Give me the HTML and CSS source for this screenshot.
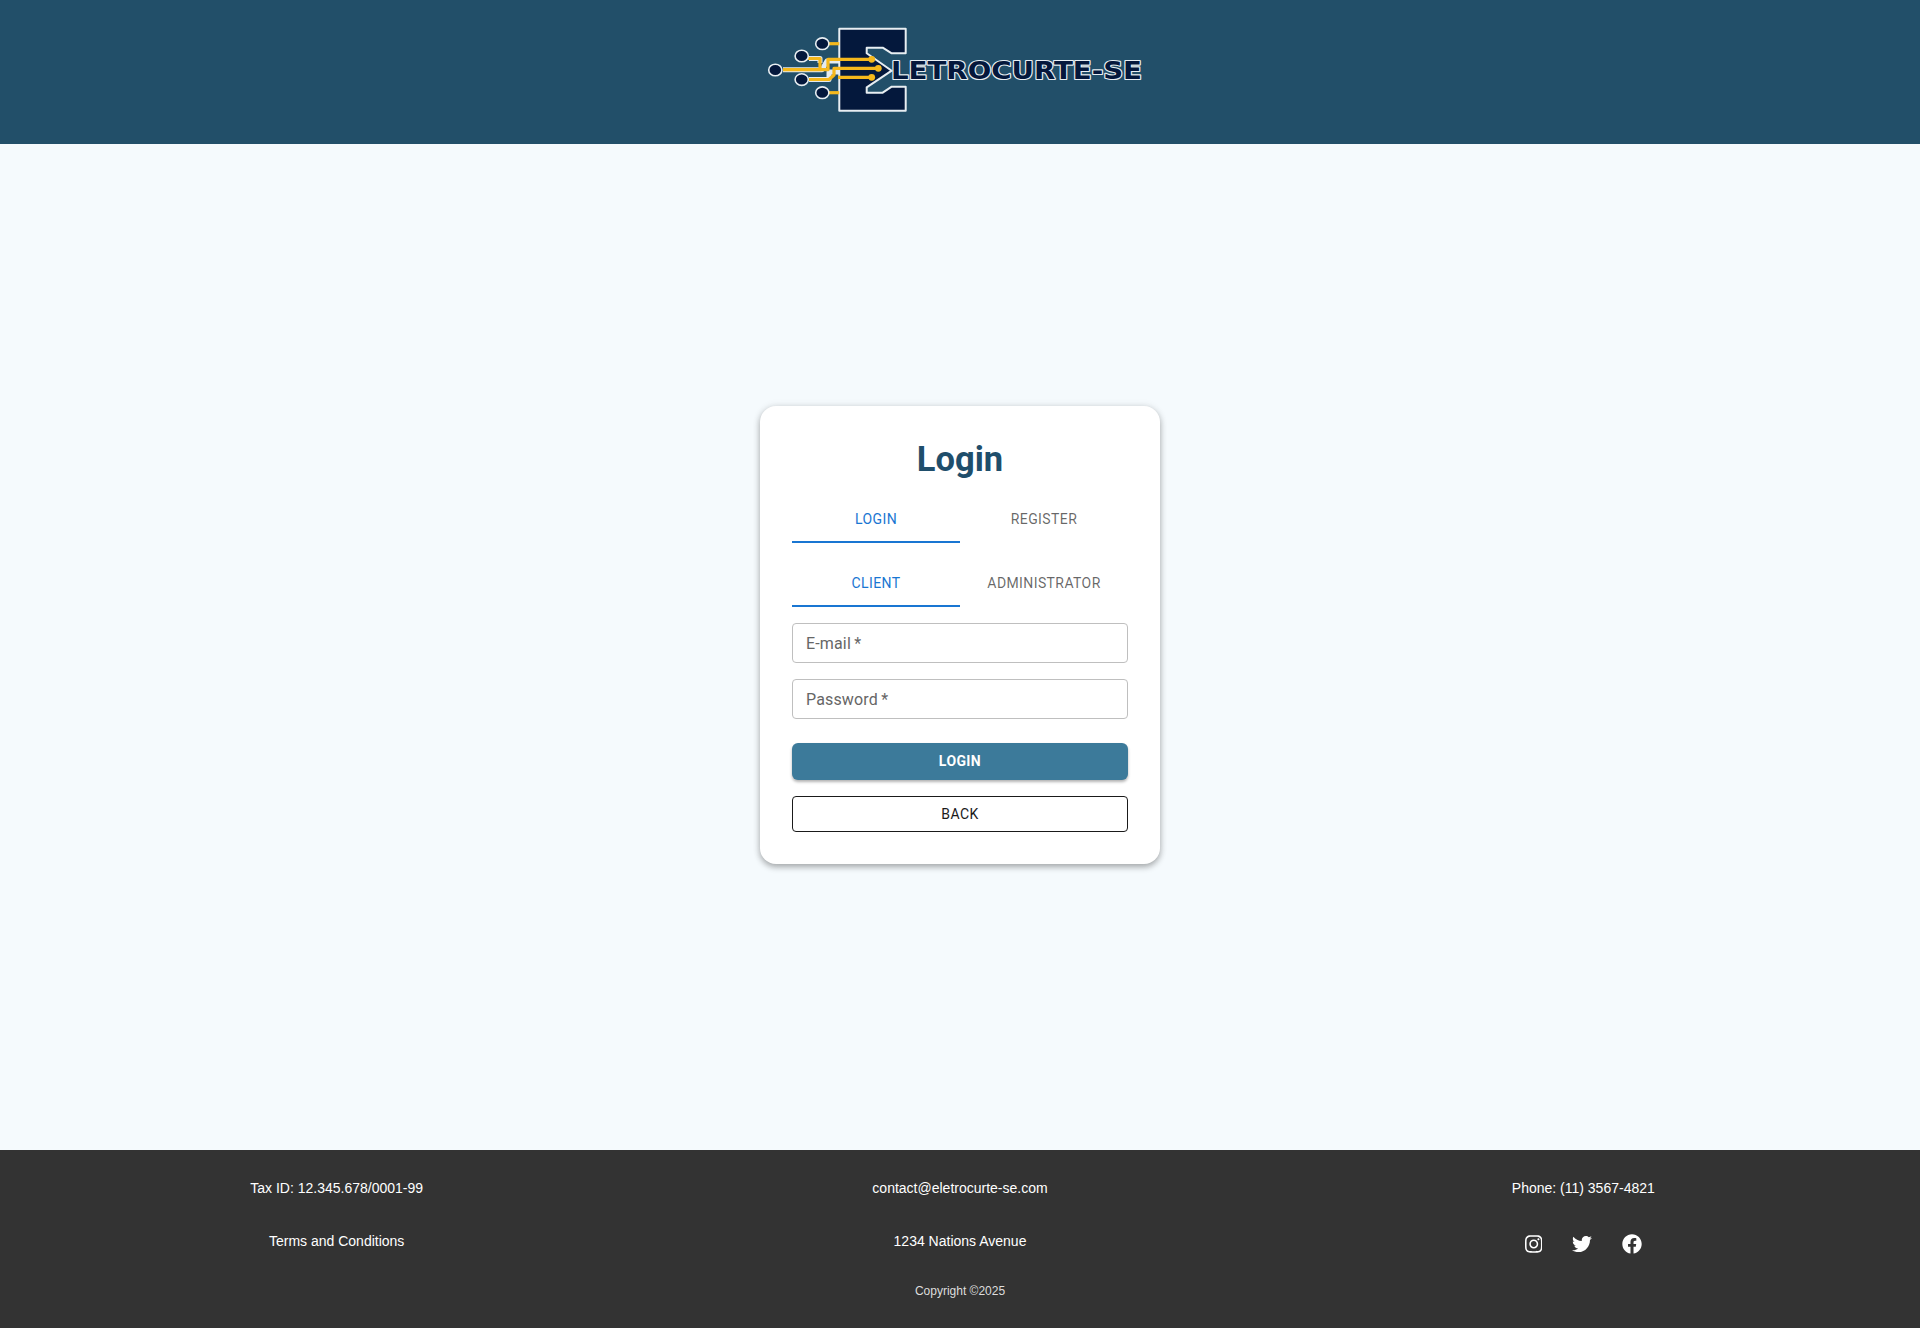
FILE: index.html
```html
<!DOCTYPE html>
<html lang="en">
<head>
    <meta charset="UTF-8">
    <meta name="viewport" content="width=device-width, initial-scale=1.0">
    <title>Eletrocurte-se - Login</title>
    <link rel="stylesheet" href="styles.css">
</head>
<body>
    <!-- Header with logo -->
    <header class="header">
        <svg class="logo" viewBox="0 0 380 90" width="380" height="90" role="img" aria-label="Eletrocurte-se">
            <!-- halo of the traces, left of the E -->
            <g class="trace-halo">
                <path d="M18 44.7H57L62 36H75"/>
                <path d="M44 33.5H55V38"/>
                <path d="M44 54.5H64V47H75"/>
            </g>
            <path class="logo-e" d="M74.3 3.7H140.7V28.3H126.7L117.7 22.7H101.7V28.3L126.7 45.7L101.7 62.3V67.7H117.7L126.7 61.7H140.7V85.7H74.3Z"/>
            <g class="trace">
                <path d="M63 18.7H74.3"/>
                <path d="M63 67.7H74.3"/>
                <path d="M43 33.5H55V44.7H18"/>
                <path d="M55 44.7H63V34.3H106.7"/>
                <path d="M43 54.5H64L69 50V43.3H113.3"/>
                <path d="M73 52.3H106.7"/>
            </g>
            <g class="trace-dot">
                <circle cx="106.7" cy="34.3" r="3.4"/>
                <circle cx="113.3" cy="43.3" r="3.4"/>
                <circle cx="106.7" cy="52.3" r="3.4"/>
            </g>
            <g class="node">
                <ellipse cx="57.3" cy="18.7" rx="6.6" ry="5.8"/>
                <ellipse cx="36.7" cy="31" rx="6.6" ry="5.8"/>
                <ellipse cx="10.3" cy="45" rx="6.6" ry="5.8"/>
                <ellipse cx="36.7" cy="54.6" rx="6.6" ry="5.8"/>
                <ellipse cx="57.3" cy="67.7" rx="6.6" ry="5.8"/>
            </g>
            <text class="logo-text" x="126" y="54" textLength="251" lengthAdjust="spacingAndGlyphs">LETROCURTE-SE</text>
        </svg>
    </header>

    <!-- Login card -->
    <main class="main">
        <div class="card">
            <h1>Login</h1>
            <div class="tabs">
                <button class="tab active" type="button">Login</button>
                <button class="tab" type="button">Register</button>
            </div>
            <div class="tabs tabs-user">
                <button class="tab active" type="button">Client</button>
                <button class="tab" type="button">Administrator</button>
            </div>
            <form class="login-form">
                <input class="field" type="email" placeholder="E-mail&#8201;*" aria-label="E-mail">
                <input class="field" type="password" placeholder="Password&#8201;*" aria-label="Password">
                <button class="btn btn-login" type="button">Login</button>
                <button class="btn btn-back" type="button">Back</button>
            </form>
        </div>
    </main>

    <!-- Footer -->
    <footer class="footer">
        <div class="footer-grid">
            <p>Tax ID: 12.345.678/0001-99</p>
            <p>contact@eletrocurte-se.com</p>
            <p>Phone: (11) 3567-4821</p>
            <a href="#">Terms and Conditions</a>
            <p>1234 Nations Avenue</p>
            <div class="social">
                <a href="#" aria-label="Instagram"><svg viewBox="0 0 448 512" width="17.5" height="20"><path d="M224.1 141c-63.6 0-114.9 51.3-114.9 114.9s51.3 114.9 114.9 114.9S339 319.5 339 255.9 287.7 141 224.1 141zm0 189.6c-41.1 0-74.7-33.5-74.7-74.7s33.5-74.7 74.7-74.7 74.7 33.5 74.7 74.7-33.6 74.7-74.7 74.7zm146.4-194.3c0 14.9-12 26.8-26.8 26.8-14.9 0-26.8-12-26.8-26.8s12-26.8 26.8-26.8 26.8 12 26.8 26.8zm76.1 27.2c-1.7-35.9-9.9-67.7-36.2-93.9-26.2-26.2-58-34.4-93.9-36.2-37-2.1-147.9-2.1-184.9 0-35.8 1.7-67.6 9.9-93.9 36.1s-34.4 58-36.2 93.9c-2.1 37-2.1 147.9 0 184.9 1.7 35.9 9.9 67.7 36.2 93.9s58 34.4 93.9 36.2c37 2.1 147.9 2.1 184.9 0 35.9-1.7 67.7-9.9 93.9-36.2 26.2-26.2 34.4-58 36.2-93.9 2.1-37 2.1-147.8 0-184.8zM398.8 388c-7.8 19.6-22.9 34.7-42.6 42.6-29.5 11.7-99.5 9-132.1 9s-102.7 2.6-132.1-9c-19.6-7.8-34.7-22.9-42.6-42.6-11.7-29.5-9-99.5-9-132.1s-2.6-102.7 9-132.1c7.8-19.6 22.9-34.7 42.6-42.6 29.5-11.7 99.5-9 132.1-9s102.7-2.6 132.1 9c19.6 7.8 34.7 22.9 42.6 42.6 11.7 29.5 9 99.5 9 132.1s2.7 102.7-9 132.1z"/></svg></a>
                <a href="#" aria-label="Twitter"><svg viewBox="0 0 512 512" width="20" height="20"><path d="M459.37 151.716c.325 4.548.325 9.097.325 13.645 0 138.72-105.583 298.558-298.558 298.558-59.452 0-114.68-17.219-161.137-47.106 8.447.974 16.568 1.299 25.34 1.299 49.055 0 94.213-16.568 130.274-44.832-46.132-.975-84.792-31.188-98.112-72.772 6.498.974 12.995 1.624 19.818 1.624 9.421 0 18.843-1.3 27.614-3.573-48.081-9.747-84.143-51.98-84.143-102.985v-1.299c13.969 7.797 30.214 12.67 47.431 13.319-28.264-18.843-46.781-51.005-46.781-87.391 0-19.492 5.197-37.36 14.294-52.954 51.655 63.675 129.3 105.258 216.365 109.807-1.624-7.797-2.599-15.918-2.599-24.04 0-57.828 46.782-104.934 104.934-104.934 30.213 0 57.502 12.67 76.67 33.137 23.715-4.548 46.456-13.32 66.599-25.34-7.798 24.366-24.366 44.833-46.132 57.827 21.117-2.273 41.584-8.122 60.426-16.243-14.292 20.791-32.161 39.308-52.628 54.253z"/></svg></a>
                <a href="#" aria-label="Facebook"><svg viewBox="0 0 512 512" width="20" height="20"><path d="M504 256C504 119 393 8 256 8S8 119 8 256c0 123.78 90.69 226.38 209.25 245V327.69h-63V256h63v-54.64c0-62.15 37-96.48 93.67-96.48 27.14 0 55.52 4.84 55.52 4.84v61h-31.28c-30.8 0-40.41 19.12-40.41 38.73V256h68.78l-11 71.69h-57.78V501C413.31 482.38 504 379.78 504 256z"/></svg></a>
            </div>
        </div>
        <p class="copyright">Copyright ©2025</p>
    </footer>
</body>
</html>
```

FILE: styles.css
```css
/* General Reset and Layout */
* {
    margin: 0;
    padding: 0;
    box-sizing: border-box;
}

body {
    font-family: 'Roboto', sans-serif;
    background-color: #F5FAFD;
    display: flex;
    flex-direction: column;
    min-height: 100vh;
}

/* Header */
.header {
    height: 144px;
    background-color: #224F69;
    display: flex;
    justify-content: center;
    padding-top: 25px;
}

.logo {
    display: block;
    margin-right: 10px;
}

.logo-e {
    fill: #04183C;
    stroke: #E8EEF2;
    stroke-width: 2;
    stroke-linejoin: round;
}

.trace,
.trace-halo {
    fill: none;
    stroke-linejoin: round;
}

.trace {
    stroke: #F5B81C;
    stroke-width: 3.2;
}

.trace-halo {
    stroke: #E4EBEF;
    stroke-width: 5;
}

.trace-dot {
    fill: #F5B81C;
}

.node {
    fill: #04183C;
    stroke: #E8EEF2;
    stroke-width: 1.6;
}

.logo-text {
    font-family: 'DejaVu Sans', sans-serif;
    font-weight: bold;
    font-size: 25px;
    fill: #04183C;
    stroke: #E8EEF2;
    stroke-width: 2.2;
    stroke-linejoin: round;
    paint-order: stroke;
}

/* Login card */
.main {
    flex: 1;
    display: flex;
    justify-content: center;
    align-items: center;
    padding-bottom: 24px;
}

.card {
    width: 400px;
    background-color: #fff;
    padding: 31px 32px 32px;
    border-radius: 16px;
    box-shadow: 0 3px 6px rgba(0, 0, 0, 0.3), 0 0 8px rgba(0, 0, 0, 0.08);
}

h1 {
    font-size: 34.5px;
    line-height: 44px;
    font-weight: 700;
    color: #1F4E6B;
    text-align: center;
    margin-bottom: 14px;
}

.tabs {
    display: flex;
}

.tabs-user {
    margin-top: 16px;
}

.tab {
    flex: 1;
    height: 48px;
    padding-top: 2px;
    background: none;
    border: none;
    border-bottom: 2px solid transparent;
    font-family: inherit;
    font-size: 14px;
    font-weight: 400;
    letter-spacing: 0.4px;
    text-transform: uppercase;
    color: rgba(0, 0, 0, 0.6);
}

.tab.active {
    color: #1976D2;
    border-bottom-color: #1976D2;
}

.login-form {
    display: flex;
    flex-direction: column;
    margin-top: 16px;
}

.field {
    height: 40px;
    padding: 0 13px;
    margin-bottom: 16px;
    border: 1px solid #BFBFBF;
    border-radius: 4px;
    font-family: inherit;
    font-size: 16px;
    letter-spacing: 0.15px;
    color: #333;
}

.field::placeholder {
    color: #666;
    opacity: 1;
}

.btn {
    font-family: inherit;
    font-size: 14px;
    letter-spacing: 0.4px;
    text-transform: uppercase;
    border-radius: 6px;
}

.btn-login {
    height: 37px;
    margin-top: 8px;
    padding-bottom: 2px;
    background-color: #3C7A9A;
    color: #fff;
    font-weight: 700;
    border: none;
    box-shadow: 0 2px 3px rgba(0, 0, 0, 0.3);
}

.btn-back {
    height: 36px;
    margin-top: 16px;
    background-color: #fff;
    color: #1A1A1A;
    font-weight: 400;
    border: 1px solid #1A1A1A;
    border-radius: 4px;
}

/* Footer */
.footer {
    height: 178px;
    background-color: #333;
    color: #fff;
    font-family: 'Liberation Sans', Arial, sans-serif;
    font-size: 14px;
    text-align: center;
    padding: 30px 25px 0;
}

.footer a {
    color: #fff;
    text-decoration: none;
}

.footer-grid {
    display: grid;
    grid-template-columns: repeat(3, 1fr);
    row-gap: 37px;
    line-height: 16px;
}

.social {
    display: flex;
    justify-content: center;
    gap: 30px;
    margin-top: 1px;
}

.social a {
    display: block;
}

.social svg {
    display: block;
    fill: #fff;
}

.copyright {
    font-size: 12px;
    color: #ddd;
    margin-top: 30px;
}
```
